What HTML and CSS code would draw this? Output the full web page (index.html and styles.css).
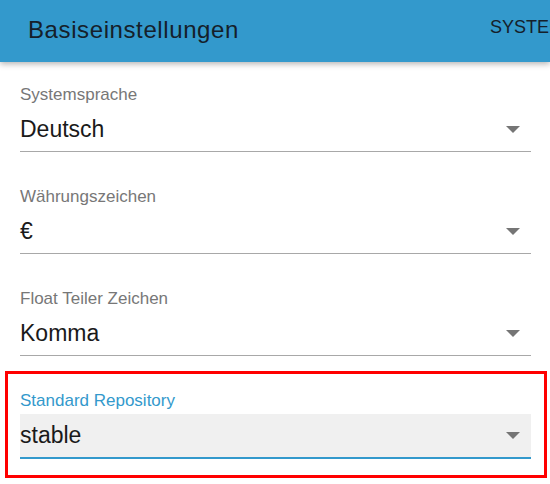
FILE: index.html
```html
<!DOCTYPE html>
<html lang="de">
<head>
<meta charset="utf-8">
<title>Basiseinstellungen</title>
<link rel="stylesheet" href="styles.css">
</head>
<body>
<header class="appbar">
  <h1 class="appbar-title">Basiseinstellungen</h1>
  <nav class="appbar-tabs"><span class="tab">System</span></nav>
</header>
<main class="form">
  <div class="field">
    <label class="field-label">Systemsprache</label>
    <div class="select"><span class="select-value">Deutsch</span><span class="arrow"></span></div>
  </div>
  <div class="field">
    <label class="field-label">Währungszeichen</label>
    <div class="select"><span class="select-value">€</span><span class="arrow"></span></div>
  </div>
  <div class="field">
    <label class="field-label">Float Teiler Zeichen</label>
    <div class="select"><span class="select-value">Komma</span><span class="arrow"></span></div>
  </div>
  <div class="highlight">
    <div class="field field-focused">
      <label class="field-label">Standard Repository</label>
      <div class="select"><span class="select-value">stable</span><span class="arrow"></span></div>
    </div>
  </div>
</main>
</body>
</html>
```

FILE: styles.css
```css
* { box-sizing: border-box; }
html, body {
  margin: 0;
  padding: 0;
  background: #ffffff;
  font-family: "Liberation Sans", Arial, sans-serif;
  overflow: hidden;
}
body { width: 550px; height: 484px; }

.appbar {
  height: 62px;
  background: #3399cc;
  box-shadow: 0 2px 6px rgba(0, 0, 0, 0.3);
  display: flex;
  align-items: flex-start;
  justify-content: space-between;
  overflow: hidden;
  position: relative;
  z-index: 1;
}
.appbar-title {
  margin: 0;
  padding: 16px 0 0 28px;
  font-size: 24px;
  line-height: 27px;
  font-weight: normal;
  letter-spacing: 0.6px;
  color: #15202a;
}
.appbar-tabs {
  padding: 17px 0 0 0;
  width: 60px;
  overflow: hidden;
  white-space: nowrap;
}
.tab {
  font-size: 18px;
  line-height: 21px;
  text-transform: uppercase;
  color: #15202a;
}

.form {
  padding: 23px 0 0 20px;
  display: flex;
  flex-direction: column;
  gap: 35px;
}

.field {
  width: 511px;
  display: flex;
  flex-direction: column;
  gap: 3px;
}
.field-label {
  font-size: 17px;
  line-height: 20px;
  color: #777777;
}
.select {
  height: 44px;
  border-bottom: 1px solid #a8a8a8;
  display: flex;
  align-items: center;
  justify-content: space-between;
  padding: 0 11px 0 0;
}
.select-value {
  font-size: 23px;
  line-height: 43px;
  color: #1a1a1a;
}
.arrow {
  width: 0;
  height: 0;
  border-left: 7px solid transparent;
  border-right: 7px solid transparent;
  border-top: 7px solid #757575;
}

.highlight {
  margin: -20px 0 0 -15px;
  width: 542px;
  border: 3px solid #ff0000;
  padding: 17px 13px 16px 12px;
}
.field-focused .field-label { color: #3399cc; }
.field-focused .select {
  height: 45px;
  background: #f0f0f0;
  border-bottom: 2px solid #3399cc;
}
```
